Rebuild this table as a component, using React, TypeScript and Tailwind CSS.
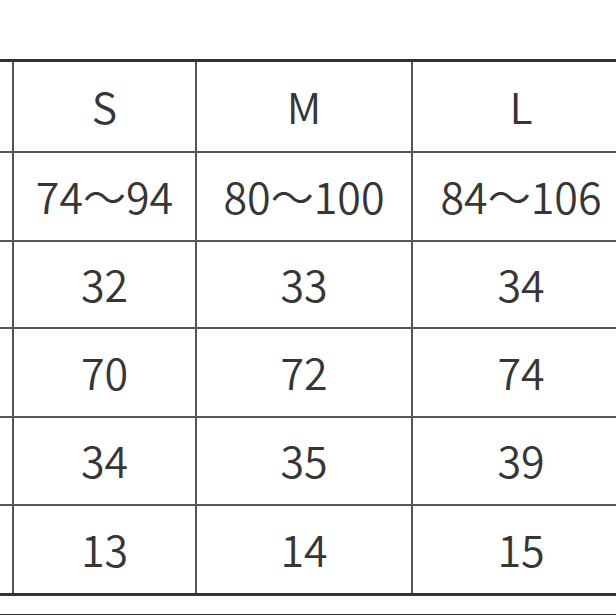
import React from "react";

const rows = [
  ["S", "M", "L"],
  ["74～94", "80～100", "84～106"],
  ["32", "33", "34"],
  ["70", "72", "74"],
  ["34", "35", "39"],
  ["13", "14", "15"],
];

const rowClasses = [
  "h-[91px] border-b-2 border-[#555555]",
  "h-[89px] border-b-2 border-[#555555]",
  "h-[87px] border-b-2 border-[#555555]",
  "h-[89px] border-b-2 border-[#555555]",
  "h-[88px] border-b-2 border-[#555555]",
  "h-[90px] border-b-[3px] border-[#333333]",
];

export default function App() {
  return (
    <div
      className="w-[616px] h-[616px] bg-white overflow-hidden pt-[59px] text-[#363636] font-[350]"
      style={{ fontFamily: '"Noto Sans CJK SC", "Noto Sans", sans-serif' }}
    >
      <div className="border-t-[3px] border-[#333333] w-[616px]">
        {rows.map((r, i) => (
          <div key={i} className={`flex w-[640px] ${rowClasses[i]}`}>
            <div className="w-[14px] h-full border-r-2 border-[#555555] shrink-0" />
            <div className="w-[183px] h-full border-r-2 border-[#555555] shrink-0 flex items-center justify-center text-[43px] leading-none pb-[3px]">
              {r[0]}
            </div>
            <div className="w-[216px] h-full border-r-2 border-[#555555] shrink-0 flex items-center justify-center text-[43px] leading-none pb-[3px]">
              {r[1]}
            </div>
            <div className="w-[216px] h-full shrink-0 flex items-center justify-center text-[43px] leading-none pb-[3px]">
              {r[2]}
            </div>
          </div>
        ))}
      </div>
      <div className="h-[18px]" />
      <div className="h-px bg-[#333333]" />
    </div>
  );
}
